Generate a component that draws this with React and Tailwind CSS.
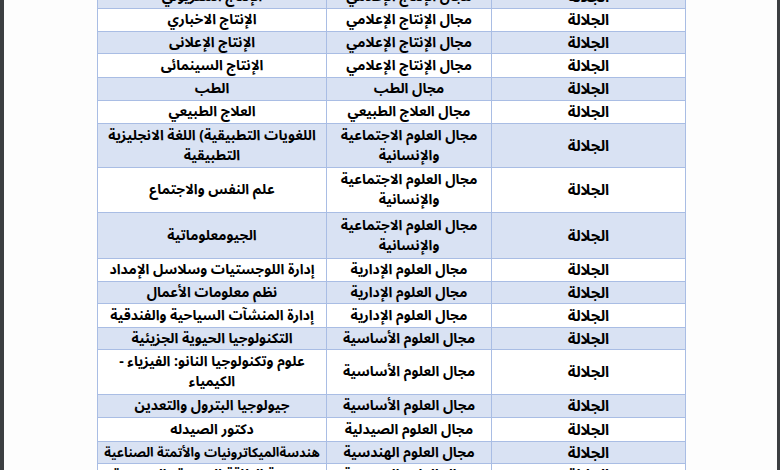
import React from 'react';

const rows = [
  { program: ['الإنتاج التلفزيوني'], field: ['مجال الإنتاج الإعلامي'], h: 23 },
  { program: ['الإنتاج الاخباري'], field: ['مجال الإنتاج الإعلامي'], h: 23 },
  { program: ['الإنتاج الإعلانى'], field: ['مجال الإنتاج الإعلامي'], h: 22 },
  { program: ['الإنتاج السينمائى'], field: ['مجال الإنتاج الإعلامي'], h: 24 },
  { program: ['الطب'], field: ['مجال الطب'], h: 23 },
  { program: ['العلاج الطبيعي'], field: ['مجال العلاج الطبيعي'], h: 23 },
  { program: ['اللغويات التطبيقية) اللغة الانجليزية', 'التطبيقية'], field: ['مجال العلوم الاجتماعية', 'والإنسانية'], h: 44 },
  { program: ['علم النفس والاجتماع'], field: ['مجال العلوم الاجتماعية', 'والإنسانية'], h: 45 },
  { program: ['الجيومعلوماتية'], field: ['مجال العلوم الاجتماعية', 'والإنسانية'], h: 46 },
  { program: ['إدارة اللوجستيات وسلاسل الإمداد'], field: ['مجال العلوم الإدارية'], h: 23 },
  { program: ['نظم معلومات الأعمال'], field: ['مجال العلوم الإدارية'], h: 22 },
  { program: ['إدارة المنشآت السياحية والفندقية'], field: ['مجال العلوم الإدارية'], h: 24 },
  { program: ['التكنولوجيا الحيوية الجزيئية'], field: ['مجال العلوم الأساسية'], h: 22 },
  { program: ['علوم وتكنولوجيا النانو:  الفيزياء -', 'الكيمياء'], field: ['مجال العلوم الأساسية'], h: 45 },
  { program: ['جيولوجيا البترول والتعدين'], field: ['مجال العلوم الأساسية'], h: 23 },
  { program: ['دكتور الصيدله'], field: ['مجال العلوم الصيدلية'], h: 24 },
  { program: ['هندسةالميكاترونيات والأتمتة الصناعية'], field: ['مجال العلوم الهندسية'], h: 22, small: true },
  { program: ['هندسة الطاقة الجديدة والمتجددة'], field: ['مجال العلوم الهندسية'], h: 23 },
];

const Lines = ({ lines, small }) => (
  <>
    {lines.map((l, i) => (
      <div key={i} className={small ? 'whitespace-nowrap text-[13px]' : 'whitespace-nowrap'}>{l}</div>
    ))}
  </>
);

const App = () => {
  return (
    <div className="w-[780px] h-[470px] overflow-hidden flex bg-[#3c3f41]">
      <div className="w-[4px] h-full bg-[#3c3f41]" />
      <div className="w-[773px] h-full bg-[#fdfdfd] overflow-hidden">
        <table
          dir="rtl"
          className="table-fixed border-collapse ml-[93px] mt-[-15px] w-[588px] text-black font-bold text-[14px] leading-[20px]"
          style={{ fontFamily: '"Noto Sans Arabic", "Noto Naskh Arabic", "DejaVu Sans", sans-serif' }}
        >
          <colgroup>
            <col className="w-[194px]" />
            <col className="w-[165px]" />
            <col className="w-[229px]" />
          </colgroup>
          <tbody>
            {rows.map((row, i) => (
              <tr
                key={i}
                className={i % 2 === 0 ? 'bg-[#d9e2f3]' : 'bg-white'}
                style={{ height: row.h }}
              >
                <td className="border border-[#a9bde4] text-center align-middle p-0 overflow-hidden text-[15px] leading-[20px]">الجلالة</td>
                <td className="border border-[#a9bde4] text-center align-middle p-0 overflow-hidden">
                  <Lines lines={row.field} />
                </td>
                <td className="border border-[#a9bde4] text-center align-middle p-0 overflow-hidden">
                  <Lines lines={row.program} small={row.small} />
                </td>
              </tr>
            ))}
          </tbody>
        </table>
      </div>
      <div className="w-[3px] h-full bg-[#3c3f41]" />
    </div>
  );
};

export default App;
